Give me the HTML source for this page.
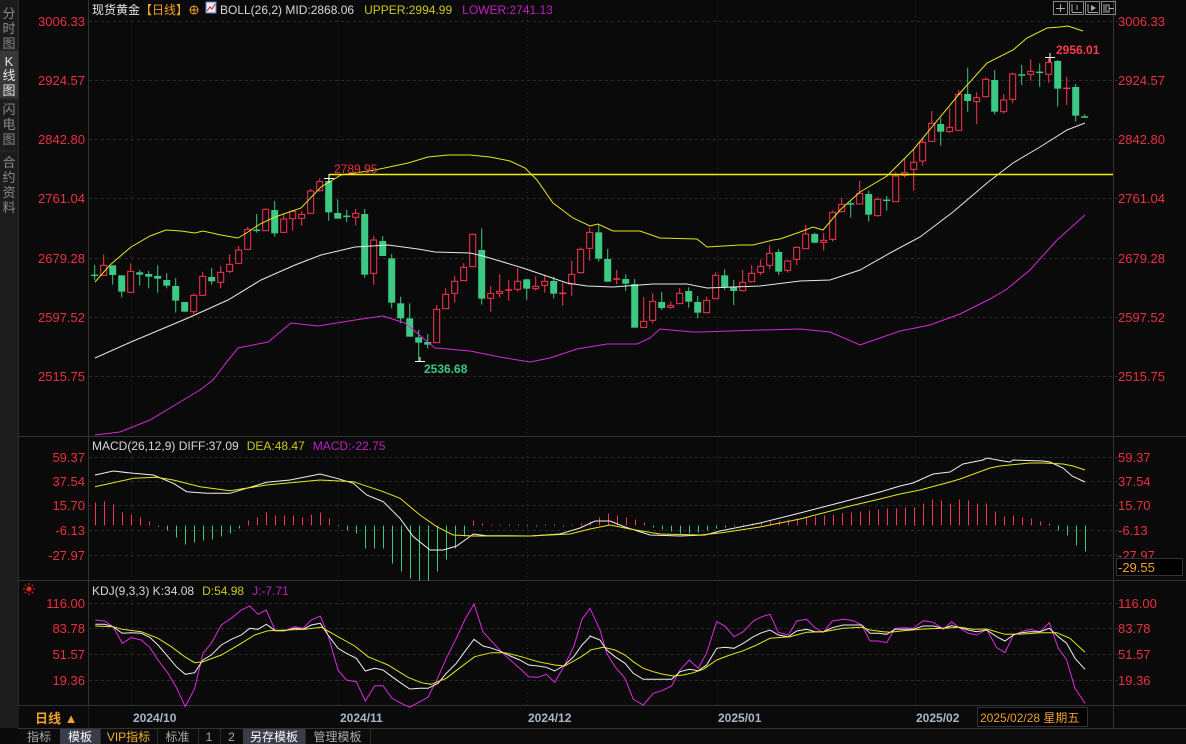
<!DOCTYPE html>
<html><head><meta charset="utf-8">
<style>
html,body{margin:0;padding:0;background:#0a0a0a;width:1186px;height:744px;overflow:hidden}
svg{position:absolute;left:0;top:0}
text{font-family:"Liberation Sans","Noto Sans CJK SC",sans-serif}
</style></head>
<body>
<svg id="s" width="1186" height="744" xmlns="http://www.w3.org/2000/svg">
<rect width="1186" height="744" fill="#0a0a0a"/>
<rect x="0" y="0" width="18" height="728" fill="#1c1c1c"/>
<rect x="0" y="51" width="18" height="47" fill="#383838"/>
<g font-size="13" fill="#8a8a8a" text-anchor="middle">
<text x="9" y="18">分</text><text x="9" y="33">时</text><text x="9" y="48">图</text>
<text x="9" y="66" fill="#e8e8e8">K</text><text x="9" y="80" fill="#e8e8e8">线</text><text x="9" y="95" fill="#e8e8e8">图</text>
<text x="9" y="114">闪</text><text x="9" y="129">电</text><text x="9" y="144">图</text>
<text x="9" y="167">合</text><text x="9" y="182">约</text><text x="9" y="197">资</text><text x="9" y="212">料</text>
</g>
<line x1="0" y1="50" x2="18" y2="50" stroke="#2e2e2e"/>
<line x1="0" y1="99" x2="18" y2="99" stroke="#2e2e2e"/>
<line x1="0" y1="151" x2="18" y2="151" stroke="#2e2e2e"/>
<line x1="18.5" y1="0" x2="18.5" y2="744" stroke="#2a2a2a"/>
<g id="g"></g>
</svg>
<script>
const G=document.getElementById('g');
let out='';
function L(x1,y1,x2,y2,c,extra){out+=`<line x1="${x1}" y1="${y1}" x2="${x2}" y2="${y2}" stroke="${c}" ${extra||''}/>`;}
function T(x,y,t,c,sz,extra){out+=`<text x="${x}" y="${y}" fill="${c}" font-size="${sz||13}" ${extra||''}>${t}</text>`;}
function PL(p,c){out+=`<polyline points="${p.map(a=>a[0].toFixed(1)+','+a[1].toFixed(1)).join(' ')}" fill="none" stroke="${c}" stroke-width="1"/>`;}
function Z(ox,oy,a){return a.map(q=>[ox+q[0]/3,oy+q[1]/3]);}
L(88.5,0,88.5,728,'#333');L(1113.5,0,1113.5,728,'#333');
L(18,436.5,1186,436.5,'#333');L(18,580.5,1186,580.5,'#333');L(18,705.5,1186,705.5,'#333');L(18,728.5,1186,728.5,'#333');
const vx=[131,338,527,717,915];
vx.forEach(x=>L(x+.5,0,x+.5,705,'#2c2c2c','stroke-dasharray="1,3"'));
const pl=[[21,'3006.33'],[80,'2924.57'],[139,'2842.80'],[198,'2761.04'],[258,'2679.28'],[317,'2597.52'],[376,'2515.75']];
const ml=[[457,'59.37'],[481,'37.54'],[505,'15.70'],[530,'-6.13'],[555,'-27.97']];
const kl=[[603,'116.00'],[628,'83.78'],[654,'51.57'],[680,'19.36']];
[pl,ml,kl].forEach(arr=>arr.forEach(([y,t])=>{L(89,y+.5,1118,y+.5,'#2c2c2c','stroke-dasharray="3,3"');
 T(85,y+5,t,'#e8323f',13,'text-anchor="end"');T(1118,y+5,t,'#e8323f',13);}));
const RED='#ff3350',GRN='#3cc983';
function cand(ox,oy,s,arr){arr.forEach((c,k)=>{const i=s+k,x=94.7+9*i;
 let bt=oy+c[0]/3,bb=oy+c[1]/3,wt=oy+c[2]/3,wb=oy+c[3]/3,col=c[4]=='r'?RED:GRN;
 L(x,wt,x,wb,col);
 if(bb-bt<1.5){L(x-3.5,bt,x+3.5,bt,col,'stroke-width="1.5"');}
 else if(c[4]=='r'){out+=`<rect x="${x-3}" y="${bt}" width="6" height="${bb-bt}" fill="#0a0a0a" stroke="${col}" stroke-width="1"/>`;}
 else{out+=`<rect x="${x-3.5}" y="${bt}" width="7" height="${bb-bt}" fill="${col}"/>`;}
});}
cand(88,150,0,[[376,376,345,390,'g'],[346,376,313,378,'r'],[346,375,346,404,'g'],[376,425,376,442,'g'],[364,427,340,427,'r'],[367,374,360,407,'g'],[372,380,363,415,'g'],[378,386,346,428,'g'],[390,407,370,415,'g'],[408,452,384,488,'g'],[456,485,456,485,'g'],[436,485,430,492,'r'],[379,436,365,436,'r'],[381,394,354,404,'g'],[367,397,348,415,'r'],[343,364,313,370,'r'],[300,340,288,340,'r'],[238,298,230,298,'r'],[241,241,192,248,'g'],[178,242,175,242,'r'],[180,250,153,260,'g'],[207,247,190,247,'r'],[184,206,180,242,'r'],[193,205,183,227,'r'],[123,190,117,190,'r'],[95,122,85,125,'r'],[93,187,85,212,'g'],[189,206,148,206,'g'],[199,203,180,216,'g'],[190,202,177,226,'r'],[192,374,177,383,'g'],[270,370,258,404,'r'],[273,318,258,318,'g'],[325,458,312,475,'g'],[460,505,440,520,'g'],[505,560,460,560,'g'],[562,578,540,636,'g'],[576,584,552,595,'g'],[478,578,465,578,'r']]);
cand(440,180,39,[[343,386,325,386,'r'],[304,340,288,368,'r'],[262,302,250,302,'r'],[163,260,160,260,'r'],[210,356,145,374,'g'],[340,355,318,395,'r'],[334,340,283,352,'r'],[330,332,300,362,'r'],[304,328,264,335,'r'],[298,326,296,360,'g'],[319,326,289,332,'r'],[304,316,283,338,'r'],[303,341,290,355,'g'],[340,341,308,377,'r'],[283,312,243,347,'r'],[208,278,202,280,'r'],[157,205,143,242,'r'],[157,236,135,245,'g'],[237,305,207,305,'g'],[297,301,270,313,'r'],[297,311,283,333,'g'],[312,443,297,443,'g'],[424,442,351,442,'r'],[364,421,340,431,'r'],[366,384,336,390,'g'],[376,382,364,386,'r'],[340,371,324,372,'r'],[333,365,322,383,'g'],[366,398,348,415,'g'],[361,398,350,400,'r'],[286,356,277,356,'r'],[286,322,268,330,'g'],[320,333,300,375,'g'],[307,332,270,334,'r'],[280,305,255,307,'r'],[259,277,238,285,'r'],[220,256,196,268,'r'],[216,275,208,285,'g'],[243,271,240,278,'r']]);
cand(780,50,78,[[592,628,590,645,'r'],[552,596,525,596,'r'],[552,578,548,580,'g'],[571,577,548,602,'r'],[487,568,482,575,'r'],[463,485,443,487,'r'],[462,462,455,503,'g'],[430,462,393,463,'r'],[432,494,422,515,'g'],[448,497,442,500,'r'],[451,451,438,482,'g'],[378,455,365,455,'r'],[368,376,327,383,'r'],[337,358,298,422,'r'],[277,333,265,347,'r'],[220,274,183,274,'r'],[222,245,205,287,'g'],[232,245,175,248,'r'],[133,241,120,241,'r'],[132,153,53,185,'g'],[143,155,127,223,'r'],[88,140,82,142,'r'],[90,185,60,193,'g'],[150,185,132,190,'r'],[72,148,68,160,'r'],[75,75,45,105,'g'],[64,73,28,92,'r'],[67,67,40,110,'g'],[37,73,25,98,'r'],[33,116,30,170,'g'],[115,115,80,165,'r'],[111,197,102,215,'g'],[201,201,193,203,'g']]);
PL([[95,282],[110,265],[131,247],[150,236],[166,230],[181,231],[195,233],[203,231],[221,235],[238,238],[248,232],[260,224],[275,217],[301,208],[321,187],[341,175],[375,170],[408,163],[428,157],[448,155],[470,155],[490,157],[510,161],[525,168],[537,180],[553,203],[573,218],[590,226],[598,224],[613,231],[640,231],[660,238],[697,239],[707,247],[740,245],[753,245],[773,240],[780,239],[800,232],[813,227],[823,230],[840,210],[860,192],[887,176],[913,150],[960,93],[987,63],[1013,50],[1027,38],[1047,28],[1060,27],[1068,26],[1083,31]],'#e6e61e');
PL([[95,358],[131,342],[188,318],[228,300],[261,280],[295,265],[321,255],[355,247],[388,245],[418,249],[435,252],[470,253],[483,256],[523,268],[567,283],[587,286],[613,287],[653,284],[687,284],[707,288],[760,286],[800,281],[830,280],[860,270],[890,253],[920,237],[953,212],[987,183],[1013,163],[1040,147],[1067,130],[1085,123]],'#e8e8e8');
PL([[95,435],[120,432],[150,420],[180,402],[200,390],[213,380],[225,364],[238,348],[268,342],[291,323],[318,326],[355,320],[383,316],[405,323],[435,348],[448,349],[470,351],[500,357],[530,362],[550,358],[577,349],[607,344],[637,344],[650,338],[660,329],[693,332],[700,332],[760,330],[800,329],[830,332],[860,345],[880,338],[900,331],[930,325],[960,314],[990,299],[1007,289],[1030,270],[1057,240],[1085,215]],'#d62ad6');
L(329,174.5,1113,174.5,'#f0f000','stroke-width="1.5"');
T(334,173,'2789.95','#e8323f',12);
L(324,178.5,334,178.5,'#fff');L(329,174,329,183,'#fff');
T(1056,54,'2956.01','#ff3a48',12,'font-weight="bold"');
L(1045,57.5,1055,57.5,'#fff');L(1050,53,1050,62,'#fff');
T(424,373,'2536.68','#3cc983',12,'font-weight="bold"');
L(415,361.5,425,361.5,'#fff');L(420,357,420,362,'#fff');
const h=[23,24,21,13,11,8,4,-1,-5,-12,-19,-17,-15,-14,-11,-8,-3,5,8,13,10,10,10,8,11,13,7,-1,-5,-8,-23,-23,-23,-38,-46,-53,-55,-55,-46,-34,-23,-11,5,2,1,1,1,1,-1,-1,1,1,-1,1,2,4,8,12,10,8,6,3,-2,-4,-6,-8,-8,-7,-5,-3,-2,-1,1,2,3,4,5,6,7,8,9,10,11,12,13,14,15,16,17,17,18,18,22,26,25,22,26,25,22,22,14,9,10,8,7,4,2,-5,-10,-20,-26];
h.forEach((v,i)=>{const x=95.5+9*i;L(x,525.5,x,525.5-v,v>0?RED:GRN);});
PL(Z(0,430,[[285,135],[340,123],[400,130],[460,135],[520,160],[560,185],[620,190],[690,190],[740,175],[800,157],[870,150],[960,132],[1010,145],[1060,160],[1100,195],[1150,215],[1200,265],[1240,320],[1290,360],[1330,360],[1370,348],[1420,312],[1460,317],[1500,317]]).concat([[530,536],[560,534],[580,528],[595,521],[610,521],[625,527],[650,535],[680,536],[705,535],[720,531],[760,523],[800,513],[850,500],[880,492],[900,486],[913,483],[933,474],[950,472],[963,464],[983,460],[987,458],[1003,461],[1010,462],[1013,460],[1043,461],[1050,462],[1063,468],[1072,476],[1085,482]]),'#f0f0f0');
PL(Z(0,430,[[285,170],[400,145],[470,142],[520,150],[600,170],[690,182],[800,165],[960,150],[1060,155],[1150,185],[1200,205],[1260,255],[1310,290],[1360,315],[1420,318],[1500,318]]).concat([[530,536],[570,534],[590,529],[610,525],[630,529],[660,534],[700,535],[720,533],[760,527],[800,519],[850,506],[880,499],[900,494],[920,490],[950,482],[960,479],[990,468],[1000,466],[1030,463],[1043,463],[1063,464],[1073,466],[1085,470]]),'#e6e61e');
const J=Z(88,590,[[22,90],[50,93],[75,110],[103,160],[130,143],[160,150],[185,172],[210,210],[240,250],[265,292],[292,350],[320,295],[345,190],[370,160],[400,105],[430,85],[460,60],[485,48],[510,73],[535,60],[562,122],[590,122],[620,110],[645,115],[670,90],[697,78],[720,135],[750,240],[775,270],[805,275],[832,333],[860,287],[885,287],[912,325],[940,340],[965,352],[995,335],[1020,322],[1050,262],[1075,205],[1105,145],[1130,90],[1158,42],[1185,125],[1212,155],[1240,185],[1267,210],[1295,235],[1322,260],[1350,262],[1375,253],[1400,277],[1430,225],[1457,170],[1482,88],[1506,55]]).concat(Z(590,590,[[0,55],[30,120],[50,190],[75,230],[105,265],[130,328],[160,345],[190,310],[215,302],[245,288],[270,240],[298,210],[325,235],[350,188],[380,95],[405,108],[432,140],[460,125],[490,93],[515,80],[540,73],[565,127],[595,135],[620,93],[650,88],[675,113],[700,127],[727,93],[760,88],[790,92],[815,105],[840,153],[865,153],[890,158],[915,115],[940,113],[970,115],[1000,92],[1030,97],[1060,118],[1085,95],[1110,115],[1135,130],[1160,135],[1190,118],[1220,173],[1245,188],[1270,135],[1295,125],[1320,118],[1350,125],[1378,98],[1405,175],[1430,210],[1455,295],[1485,340]]));
PL(J,'#e02ae0');
PL(Z(88,590,[[22,103],[50,103],[75,110],[103,130],[130,128],[160,130],[185,142],[210,165],[240,200],[265,230],[292,253],[320,248],[345,210],[370,195],[400,165],[430,148],[460,135],[485,115],[510,118],[535,103],[562,122],[590,122],[620,115],[645,118],[670,105],[697,100],[720,135],[750,175],[775,190],[805,205],[832,243],[860,235],[885,240],[912,260],[940,280],[965,297],[995,295],[1020,295],[1050,280],[1075,250],[1105,220],[1130,185],[1158,148],[1185,168],[1212,175],[1240,185],[1267,198],[1295,210],[1322,225],[1350,228],[1375,232],[1400,243],[1430,225],[1457,200],[1482,165],[1506,140]]).concat(Z(590,590,[[0,138],[30,150],[50,180],[75,200],[105,220],[130,250],[160,268],[190,268],[215,268],[245,268],[270,245],[298,238],[325,242],[350,225],[380,175],[405,172],[432,175],[460,160],[490,140],[515,128],[540,120],[565,135],[595,140],[620,123],[650,118],[675,125],[700,125],[727,113],[760,105],[790,105],[815,105],[840,130],[865,130],[890,133],[915,118],[940,118],[970,118],[1000,108],[1030,108],[1060,115],[1085,107],[1110,113],[1135,120],[1160,125],[1190,120],[1220,140],[1245,153],[1270,135],[1295,128],[1320,125],[1350,125],[1378,115],[1405,140],[1430,160],[1455,205],[1485,238]])),'#f0f0f0');
PL(Z(88,590,[[22,108],[75,110],[103,118],[160,125],[210,145],[250,170],[290,200],[320,218],[345,215],[400,195],[460,160],[500,135],[540,122],[600,120],[650,118],[700,112],[750,140],[800,168],[840,200],[900,225],[960,262],[1000,278],[1030,283],[1075,265],[1120,230],[1160,200],[1210,188],[1250,188],[1300,200],[1350,215],[1400,225],[1430,228],[1480,200],[1506,182]]).concat(Z(590,590,[[0,180],[40,172],[75,180],[105,195],[130,215],[160,235],[190,245],[215,252],[250,258],[280,255],[310,248],[340,238],[380,210],[420,195],[460,182],[500,165],[540,145],[600,140],[650,127],[700,125],[760,115],[815,112],[840,120],[880,125],[900,127],[940,122],[1000,117],[1060,115],[1110,112],[1150,118],[1190,117],[1245,133],[1300,132],[1350,128],[1400,128],[1440,145],[1485,187]])),'#e6e61e');
out+=`<text x="92" y="14" font-size="12"><tspan fill="#e8e8e8">现货黄金</tspan><tspan fill="#f0a030">【日线】</tspan></text>`;
out+=`<circle cx="194" cy="10" r="4" fill="none" stroke="#f0a030"/><line x1="190" y1="10" x2="198" y2="10" stroke="#f0a030"/><line x1="194" y1="6" x2="194" y2="14" stroke="#f0a030"/>`;
out+=`<rect x="206" y="2" width="10" height="11" fill="#e8e8f8" stroke="#6080c0"/><polyline points="207,11 210,7 212,9 215,4" fill="none" stroke="#d02020"/>`;
out+=`<text x="220" y="14" font-size="12"><tspan fill="#d8d8d8">BOLL(26,2) MID:2868.06</tspan><tspan fill="#c8c820" dx="10">UPPER:2994.99</tspan><tspan fill="#c020c0" dx="10">LOWER:2741.13</tspan></text>`;
out+=`<text x="92" y="450" font-size="12"><tspan fill="#d8d8d8">MACD(26,12,9) DIFF:37.09</tspan><tspan fill="#c8c820" dx="8">DEA:48.47</tspan><tspan fill="#c020c0" dx="8">MACD:-22.75</tspan></text>`;
out+=`<text x="92" y="595" font-size="12"><tspan fill="#d8d8d8">KDJ(9,3,3) K:34.08</tspan><tspan fill="#c8c820" dx="8">D:54.98</tspan><tspan fill="#c020c0" dx="8">J:-7.71</tspan></text>`;
out+=`<circle cx="29" cy="589" r="2.5" fill="#ff2020"/>`;
for(let a=0;a<8;a++){const r=a*Math.PI/4;L(29+4*Math.cos(r),589+4*Math.sin(r),29+6*Math.cos(r),589+6*Math.sin(r),'#ff2020');}
[1053,1069,1085,1101].forEach((x)=>{out+=`<rect x="${x+.5}" y="1.5" width="14" height="13" fill="none" stroke="#888"/>`;});
L(1060.5,4,1060.5,12,'#aaa');L(1056,8.5,1065,8.5,'#aaa');
L(1072,4,1072,12,'#aaa');L(1072,12.5,1082,12.5,'#aaa');L(1077,5,1077,10,'#aaa');
L(1088,4,1088,12,'#aaa');L(1088,12.5,1098,12.5,'#aaa');out+=`<polygon points="1091,5 1096,8 1091,11" fill="#aaa"/>`;
L(1104,4,1104,13,'#aaa');out+=`<rect x="1106" y="5" width="3" height="7" fill="none" stroke="#aaa"/>`;L(1109,8.5,1114,8.5,'#aaa');
out+=`<rect x="1116.5" y="558.5" width="66" height="17" fill="#000" stroke="#333"/>`;T(1118,572,'-29.55','#f0a030',13);
out+=`<rect x="18.5" y="706" width="70" height="22" fill="#0a0a0a"/>`;
T(35,723,'日线 ▲','#f0a030',13,'font-weight="bold"');
[[133,'2024/10'],[340,'2024/11'],[528,'2024/12'],[718,'2025/01'],[916,'2025/02']].forEach(([x,t])=>T(x,722,t,'#a8b8c8',12,'font-weight="bold"'));
out+=`<rect x="977.5" y="707.5" width="110" height="19" fill="#000" stroke="#333"/>`;
T(980,722,'2025/02/28 星期五','#f0a030',12);
out+=`<rect x="18" y="729" width="1168" height="15" fill="#0c0c0c"/>`;
const tabs=[[18,60,'指标','#aaa',0],[60,100,'模板','#fff',1],[100,157,'VIP指标','#f0b030',0],[157,198,'标准','#aaa',0],[198,220,'1','#aaa',0],[220,243,'2','#aaa',0],[243,305,'另存模板','#fff',1],[305,370,'管理模板','#aaa',0]];
tabs.forEach(([a,b,t,c,s])=>{if(s)out+=`<rect x="${a}" y="729" width="${b-a}" height="15" fill="#3a3c48"/>`;
 L(b+.5,729,b+.5,744,'#2a2a2a');T((a+b)/2,741,t,c,12,'text-anchor="middle"');});
G.innerHTML=out;
</script>
</body></html>
